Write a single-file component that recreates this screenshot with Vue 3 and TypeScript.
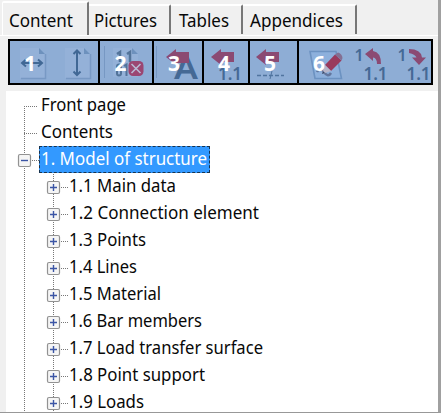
<script setup lang="ts">
interface Tab { label: string; width: number; size: number; pad: number }
interface Row { label: string; level: number; toggle?: '+' | '-'; selected?: boolean; width: number }
interface Group { id: number; x: number; width: number; labelX: number }

const tabs: Tab[] = [
  { label: 'Content', width: 87, size: 64, pad: 6 },
  { label: 'Pictures', width: 82, size: 63, pad: 5 },
  { label: 'Tables', width: 72, size: 50, pad: 8 },
  { label: 'Appendices', width: 114, size: 93, pad: 7 },
]
const rows: Row[] = [
  { label: 'Front page', level: 0, width: 85 },
  { label: 'Contents', level: 0, width: 72 },
  { label: '1. Model of structure', level: 0, toggle: '-', selected: true, width: 166 },
  { label: '1.1 Main data', level: 1, toggle: '+', width: 107 },
  { label: '1.2 Connection element', level: 1, toggle: '+', width: 190 },
  { label: '1.3 Points', level: 1, toggle: '+', width: 77 },
  { label: '1.4 Lines', level: 1, toggle: '+', width: 68 },
  { label: '1.5 Material', level: 1, toggle: '+', width: 92 },
  { label: '1.6 Bar members', level: 1, toggle: '+', width: 133 },
  { label: '1.7 Load transfer surface', level: 1, toggle: '+', width: 194 },
  { label: '1.8 Point support', level: 1, toggle: '+', width: 136 },
  { label: '1.9 Loads', level: 1, toggle: '+', width: 75 },
]
const groups: Group[] = [
  { id: 1, x: 10, width: 88, labelX: 24 },
  { id: 2, x: 100, width: 52, labelX: 114.5 },
  { id: 3, x: 154, width: 48, labelX: 168 },
  { id: 4, x: 204, width: 44, labelX: 218 },
  { id: 5, x: 250, width: 47, labelX: 264 },
  { id: 6, x: 299, width: 132, labelX: 313 },
]
</script>

<template>
  <main class="window">
    <nav class="tabs">
      <div v-for="(t, i) in tabs" :key="t.label" class="tab" :class="{ active: i === 0 }" :style="{ width: t.width + 'px', paddingLeft: t.pad + 'px' }">
        <svg class="label" :width="t.size" height="26"><text x="0" y="18" :textLength="t.size" lengthAdjust="spacingAndGlyphs">{{ t.label }}</text></svg>
      </div>
    </nav>
    <div class="toolbar">
      <svg v-for="g in groups" :key="g.id" class="group" :width="g.width" height="42" :viewBox="`${g.x} 41 ${g.width} 42`">
        <template v-if="g.id === 1">
          <path class="page" d="M20 48H39L45 54V78H20Z" /><path class="fold" d="M39 48V54H45Z" /><path class="edge" d="M21 78.5H45.5V54" />
          <path class="arrow" d="M22 63H42M26 59.5L22 63L26 66.5M38 59.5L42 63L38 66.5" />
          <path class="page" d="M65 48H84L90 54V78H65Z" /><path class="fold" d="M84 48V54H90Z" /><path class="edge" d="M66 78.5H90.5V54" />
          <path class="arrow" d="M77 51V74M73.5 54L77 50.5L80.5 54M73.5 71.5L77 75L80.5 71.5" />
        </template>
        <template v-else-if="g.id === 2">
          <path class="rule" d="M104.5 46V78" /><path class="page" d="M113 48H132L138 54V77H113Z" /><path class="fold" d="M132 48V54H138Z" />
          <path d="M117 54L120 52V62M127 54L130 52V62" stroke="#527399" stroke-width="2.500" fill="none" />
          <path d="M117 66.500Q117 64.500 119 64.500T121 66.500V73.500Q121 75.500 119 75.500T117 73.500ZM124 66L126.500 64.500V76" stroke="#527399" stroke-width="2" fill="none" />
          <rect x="128.500" y="61" width="15" height="15" rx="4.500" fill="#9b4672" />
          <path d="M131.500 64L140.500 73M140.500 64L131.500 73" stroke="#b9b9d4" stroke-width="1.600" />
        </template>
        <template v-else-if="g.id === 3">
          <path class="rule" d="M156.500 46V78" />
          <text class="ico" x="174" y="79" font-size="31" textLength="24" lengthAdjust="spacingAndGlyphs">A</text>
          <path class="red" d="M166 57L176 49V52H189V63H176V65Z" />
        </template>
        <template v-else-if="g.id === 4">
          <path class="red" d="M211 57L221 49V52H234V62H221V65Z" />
          <text class="ico" x="218" y="80" font-size="17" textLength="24">1.1</text>
        </template>
        <template v-else-if="g.id === 5">
          <path class="red" d="M256 57L266 49V52H279V62H266V65Z" />
          <path d="M257 75.500H284" stroke="#50749f" stroke-width="1.500" stroke-dasharray="4 2" /><path d="M272 71L270 79" stroke="#50749f" />
        </template>
        <template v-else>
          <path d="M310 51.500H336L341.500 78.500H315Z" fill="#8db0dc" stroke="#6c92c1" stroke-width="1.600" />
          <path d="M317 72Q320 66 324 72T331 73" stroke="#62769d" fill="none" stroke-width="2.500" />
          <path d="M325 65L335 54.500L341.500 60.500L331 71Z" fill="#993a5d" /><path d="M335 54.500L338 52.500Q342 53.500 342.500 58L341.500 60.500Z" fill="#846f92" /><path d="M325 65L322 74L331 71Z" fill="#b6b5c9" /><path d="M323 71L322 74L325 73Z" fill="#32496c" />
          <text class="ico" x="354.500" y="60.500" font-size="16">1</text><text class="ico" x="363.500" y="80" font-size="17" textLength="24">1.1</text>
          <path class="red" d="M365 54L373 48V51Q381 52 381 64H377Q377 58 373 57.500V61Z" />
          <text class="ico" x="397.500" y="60.500" font-size="16">1</text><text class="ico" x="406.500" y="80" font-size="17" textLength="24">1.1</text>
          <path class="red" d="M409 49Q421 49 422 57.500H426L419 65L412 57.500H416.500Q415 54 409 53Z" />
        </template>
        <text class="num" :x="g.labelX" y="71">{{ g.id }}</text>
      </svg>
    </div>
    <section class="tree">
      <svg class="lines" width="60" height="320">
        <path d="M18.500 15V320M47.500 81V320" />
      </svg>
      <div v-for="r in rows" :key="r.label" class="row" :class="{ child: r.level === 1, selected: r.selected }">
        <svg class="node" width="29" height="27">
          <path class="dots" :d="r.toggle ? 'M20 13.500H27' : 'M12 13.500H26'" />
          <template v-if="r.toggle">
            <rect x="6.500" y="7.500" width="12" height="12" rx="1.500" fill="#f5f5f5" stroke="#929292" stroke-width="1.200" />
            <path :d="r.toggle === '+' ? 'M9 13.500H16M12.500 10V17' : 'M9 13.500H16'" stroke="#3b55a5" stroke-width="1.400" />
          </template>
        </svg>
        <span class="caption"><svg class="label" :width="r.width" height="26"><text x="0" y="17.500" :textLength="r.width" lengthAdjust="spacingAndGlyphs">{{ r.label }}</text></svg></span>
      </div>
    </section>
  </main>
</template>

<style>
body { overflow: hidden; }
</style>
<style scoped>
.window { box-sizing: border-box; width: 441px; height: 413px; background: #f0f0f0; border-right: 3px solid #a0a0a0; border-bottom: 1px solid #989898; display: flex; flex-direction: column; overflow: hidden; font-family: "Noto Sans", "Open Sans", sans-serif; }
.tabs { height: 36px; box-sizing: border-box; padding-left: 2px; display: flex; align-items: flex-start; border-bottom: 1px solid #fff; flex: none; }
.tab { box-sizing: border-box; height: 30px; margin-top: 4px; padding-top: 3px; border-top: 2px solid #fff; border-right: 2px solid #777; border-radius: 0 2px 0 0; }
.tab.active { height: 34px; margin-top: 1px; padding-top: 6px; border-left: 1px solid #fff; border-radius: 2px 2px 0 0; }
.label { display: block; overflow: visible; font-size: 18px; fill: #080808; }
.toolbar { box-sizing: border-box; width: 425px; height: 46px; margin: 3px 0 0 8px; border: 2px solid #000; background: #000; display: flex; gap: 2px; flex: none; }
.group { display: block; background: #8eadd5; flex: none; }
.page { fill: #94b1d8; }
.fold { fill: #6d91bd; }
.edge { fill: none; stroke: #7899c4; stroke-width: 1.5; }
.arrow { fill: none; stroke: #416895; stroke-width: 2; }
.rule { stroke: #7798c3; }
.ico { fill: #456995; font-family: "Noto Sans", sans-serif; font-weight: 600; }
.red { fill: #8b4a73; }
.num { fill: #fff; font: bold 21px "Noto Sans", sans-serif; }
.tree { position: relative; box-sizing: border-box; margin: 6px 0 0 6px; height: 321px; padding-top: 2px; background: #fff; overflow: hidden; flex: none; }
.lines { position: absolute; left: 0; top: 0; }
.lines path, .dots { stroke: #777; stroke-width: 1; stroke-dasharray: 1 1; fill: none; }
.row { position: relative; height: 27px; padding-left: 6px; display: flex; }
.child { padding-left: 35px; }
.node { display: block; flex: none; }
.caption { height: 26px; }
.child .caption { margin-left: -1.5px; }
.selected .caption { box-sizing: border-box; height: 27px; width: 171px; margin: -1px 0 0 -2px; padding: 0 0 0 1px; background: #3399ff; border: 1px dashed #17334f; }
.selected .label { fill: #fff; }
</style>
